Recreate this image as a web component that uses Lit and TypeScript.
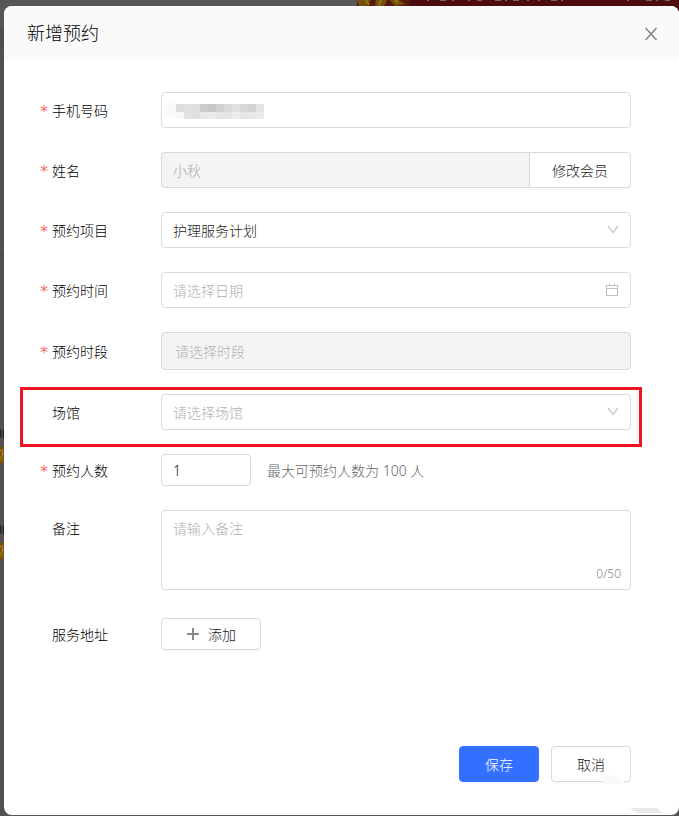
import { LitElement, html, css, svg } from "lit";
import { customElement, state } from "lit/decorators.js";

const MASK_TOP = ["#dcdcdc", "#e2e2e2", "#dfdfdf", "#cdcdcd", "#c6c6c6", "#d0d0d0", "#d9d9d9", "#e0e0e0", "#d8d8d8", "#d3d3d3", "#e3e3e3"];
const MASK_BOTTOM = ["#f8f8f8", "#e3e3e3", "#e0e0e0", "#e8e8e8", "#ebebeb", "#e6e6e6", "#e5e5e5", "#ececec", "#e6e6e6", "#e9e9e9", "#ebebeb"];

@customElement("app-root")
export class AppRoot extends LitElement {
  @state() private note = "";

  static styles = css`
    :host {
      position: relative;
      box-sizing: border-box;
      min-height: 100vh;
      padding: 6px 0 1px 4px;
      overflow: hidden;
      background: #575656;
      font-family: "Noto Sans", "Noto Sans CJK SC", sans-serif;
      font-size: 14px;
      font-weight: 300;
      color: #333;
      display: flex;
    }
    * {
      box-sizing: border-box;
    }
    .side {
      position: absolute;
      left: 0;
      top: 0;
      bottom: 0;
      width: 4px;
      overflow: hidden;
    }
    .banner {
      position: absolute;
      left: 357px;
      right: 0;
      top: 0;
      height: 20px;
      background: #4e0c0d;
      overflow: hidden;
    }
    .banner svg,
    .side svg {
      display: block;
    }
    .modal {
      position: relative;
      flex: 1;
      display: flex;
      flex-direction: column;
      border-radius: 8px;
      background: #fff;
      overflow: hidden;
    }
    .head {
      display: flex;
      align-items: center;
      justify-content: space-between;
      height: 54px;
      padding: 0 20px 0 23px;
      background: #fafafa;
    }
    h1 {
      margin: 0;
      font-size: 18px;
      font-weight: 300;
      line-height: 26px;
      color: #000;
    }
    .close {
      display: flex;
      padding: 2px 1px 0;
      border: 0;
      background: none;
    }
    form {
      display: flex;
      flex-direction: column;
      gap: 24px;
      padding: 32px 48px 33px 36px;
      flex: 1;
    }
    .row {
      position: relative;
      display: grid;
      grid-template-columns: 12px 109px minmax(0, 1fr);
      align-items: center;
    }
    .row.top {
      align-items: start;
      padding-bottom: 4px;
    }
    .star {
      grid-column: 1;
      padding-top: 4px;
      font-family: "DejaVu Sans", sans-serif;
      font-size: 16px;
      font-weight: 400;
      line-height: 20px;
      color: #f56c6c;
    }
    .name {
      grid-column: 2;
      padding-top: 2px;
      line-height: 20px;
      color: #000;
    }
    .row.top .name {
      padding-top: 9px;
    }
    .field {
      grid-column: 3;
      position: relative;
      display: flex;
      align-items: center;
    }
    input,
    select,
    textarea,
    button {
      margin: 0;
      font: inherit;
      outline: none;
    }
    .box {
      display: block;
      width: 100%;
      height: 36px;
      padding: 0 11px;
      border: 1px solid #d9d9d9;
      border-radius: 4px;
      background: #fff;
      color: #222;
      appearance: none;
    }
    .box::placeholder {
      color: #b0b0b0;
      opacity: 1;
    }
    .box.off {
      background: #f4f4f4;
      color: #a8a8a8;
      opacity: 1;
    }
    .box.tall {
      height: 38px;
      padding: 0 13px;
    }
    .box.joined {
      flex: 1;
      width: auto;
      min-width: 0;
      border-right: 0;
      border-radius: 4px 0 0 4px;
    }
    .box.empty {
      color: #b0b0b0;
    }
    .box.count {
      width: 90px;
      height: 32px;
    }
    textarea.box {
      height: 80px;
      padding: 7px 11px;
      line-height: 22px;
      resize: none;
    }
    .hint {
      margin-left: 16px;
      color: #666;
    }
    .left {
      position: absolute;
      right: 10px;
      bottom: 6px;
      font-size: 12px;
      line-height: 20px;
      color: #888;
    }
    .glyph {
      position: absolute;
      right: 12px;
      top: 11px;
      pointer-events: none;
    }
    .mask {
      position: absolute;
      left: 3px;
      top: 9px;
      pointer-events: none;
    }
    .btn {
      display: flex;
      align-items: center;
      justify-content: center;
      gap: 8px;
      width: 80px;
      height: 36px;
      padding: 0;
      border: 1px solid #d9d9d9;
      border-radius: 4px;
      background: #fff;
      color: #222;
      box-shadow: 0 2px 0 rgba(0, 0, 0, 0.02);
    }
    .btn.change {
      width: 102px;
      border-radius: 0 4px 4px 0;
    }
    .btn.add {
      width: 100px;
      height: 32px;
    }
    .btn.save {
      border-color: #3370ff;
      background: #3370ff;
      color: #fff;
    }
    .mark {
      position: absolute;
      inset: -7px -11px -17px -20px;
      border: 3px solid #ed1420;
      pointer-events: none;
    }
    .foot {
      display: flex;
      justify-content: flex-end;
      gap: 12px;
      margin-top: auto;
    }
    .smudge {
      position: absolute;
      right: 16px;
      bottom: 0;
      pointer-events: none;
    }
  `;

  private arrow() {
    return html`<svg class="glyph" width="12" height="14" viewBox="0 0 12 14" fill="none" stroke="#bfbfbf" stroke-width="1.2">
      <path d="M1.2 3.2 6 9.6l4.8-6.4" />
    </svg>`;
  }

  private label(id: string, text: string, required = true) {
    return html`${required ? html`<span class="star" aria-hidden="true">*</span>` : null}
      <label class="name" for=${id}>${text}</label>`;
  }

  private behind() {
    return html`
      <div class="side" aria-hidden="true">
        <svg width="4" height="816">
          <rect y="48" width="4" height="768" fill="#53504e" />
          <rect y="26" width="4" height="24" fill="#4f4e4e" />
          <path d="M0 255.5h4M0 385.5h4M0 481.5h4M0 577.5h4" stroke="#484644" />
          ${[428, 524].map(
            (y) => svg`
              <path d=${`M0 ${y + 2}h1v3h-1M0 ${y + 6}h1v3h-1M3.500 ${y + 2}v8`} stroke="#161616" fill="none" />
              <rect y=${y + 19} width="4" height="16" fill="#80550a" />
              <path d=${`M0 ${y + 22.5}h2.500v6M0 ${y + 29}l3 3`} stroke="#a68a55" fill="none" />`
          )}
        </svg>
      </div>
      <div class="banner" aria-hidden="true">
        <svg width="323" height="10">
          <rect width="53" height="10" fill="#57190b" />
          <path d="M0 0h14l-4 6H2zM19 0h11l-3 6h-9zM33 0h9l6 4-10 2z" fill="#76500f" />
          <path d="M9 0l3 5M24 0l-2 5M38 0l3 3" stroke="#8c7818" stroke-width="2" />
          <path
            d="M71 0v1M83 0h6M96 0v1M112 0v1M120 0h5M138 0h6M149 0v1M156 0h6M171 0v1M182 0v1M194 0h6M205 0v1M271 0v1M289 0h6M300 0v1M308 0h5"
            stroke="#76685f"
            stroke-width="2"
            fill="none"
          />
        </svg>
      </div>
    `;
  }

  render() {
    return html`
      ${this.behind()}
      <section class="modal" role="dialog" aria-labelledby="title">
        <header class="head">
          <h1 id="title">新增预约</h1>
          <button class="close" type="button" aria-label="关闭">
            <svg width="14" height="14" viewBox="0 0 14 14" fill="none" stroke="#858585" stroke-width="1.5">
              <path d="M1.500 1 12.500 13M12.500 1 1.500 13" />
            </svg>
          </button>
        </header>
        <form @submit=${(e: Event) => e.preventDefault()}>
          <div class="row">
            ${this.label("phone", "手机号码")}
            <div class="field">
              <input class="box" id="phone" type="tel" />
              <svg class="mask" width="101" height="20">
                <circle cx="7" cy="9" r="8" fill="#fafafa" />
                ${MASK_TOP.map((c, i) => svg`<rect x=${12 + i * 8} y="3" width="8" height="8" fill=${c} />`)}
                ${MASK_BOTTOM.map((c, i) => svg`<rect x=${12 + i * 8} y="11" width="8" height="7" fill=${c} />`)}
              </svg>
            </div>
          </div>
          <div class="row">
            ${this.label("member", "姓名")}
            <div class="field">
              <input class="box off joined" id="member" value="小秋" disabled />
              <button class="btn change" type="button">修改会员</button>
            </div>
          </div>
          <div class="row">
            ${this.label("item", "预约项目")}
            <div class="field">
              <select class="box" id="item">
                <option>护理服务计划</option>
              </select>
              ${this.arrow()}
            </div>
          </div>
          <div class="row">
            ${this.label("date", "预约时间")}
            <div class="field">
              <input class="box" id="date" placeholder="请选择日期" />
              <svg class="glyph" width="14" height="14" viewBox="0 0 14 14" fill="none" stroke="#bfbfbf">
                <path d="M1.500 2.500h11v10h-11zM1.500 5.500h11M4.500 0.500v3M9.500 0.500v3" />
              </svg>
            </div>
          </div>
          <div class="row">
            ${this.label("slot", "预约时段")}
            <div class="field">
              <input class="box off tall" id="slot" placeholder="请选择时段" disabled />
            </div>
          </div>
          <div class="row">
            ${this.label("venue", "场馆", false)}
            <div class="field">
              <select class="box empty" id="venue">
                <option>请选择场馆</option>
              </select>
              ${this.arrow()}
            </div>
            <div class="mark"></div>
          </div>
          <div class="row">
            ${this.label("people", "预约人数")}
            <div class="field">
              <input class="box count" id="people" value="1" inputmode="numeric" />
              <span class="hint">最大可预约人数为 100 人</span>
            </div>
          </div>
          <div class="row top">
            ${this.label("note", "备注", false)}
            <div class="field">
              <textarea
                class="box"
                id="note"
                maxlength="50"
                placeholder="请输入备注"
                @input=${(e: Event) => (this.note = (e.target as HTMLTextAreaElement).value)}
              ></textarea>
              <span class="left">${this.note.length}/50</span>
            </div>
          </div>
          <div class="row">
            ${this.label("address", "服务地址", false)}
            <div class="field">
              <button class="btn add" id="address" type="button">
                <svg width="14" height="14" viewBox="0 0 14 14" stroke="#888" stroke-width="2">
                  <path d="M1 7h12M7 1v12" />
                </svg>
                添加
              </button>
            </div>
          </div>
          <div class="foot">
            <button class="btn save" type="submit">保存</button>
            <button class="btn" type="button">取消</button>
          </div>
        </form>
        <svg class="smudge" width="62" height="42" aria-hidden="true">
          <path d="M2 11V4l4-2q8-1 13 3l5 4v2z" fill="#fafafa" />
          <path d="M29 35h27l5 5H36z" fill="#e9e9e9" />
        </svg>
      </section>
    `;
  }
}
